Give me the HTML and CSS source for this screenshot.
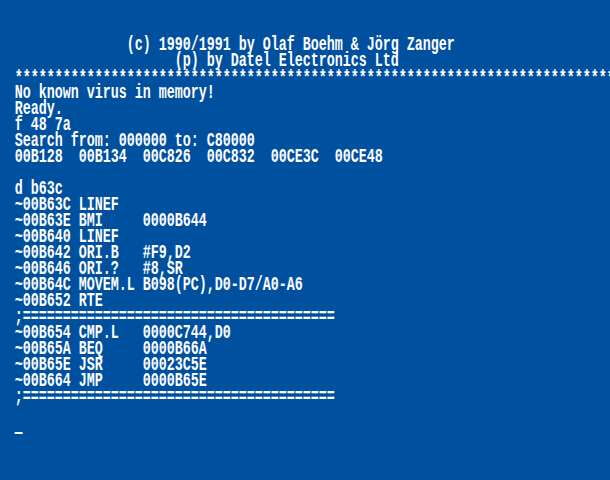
FILE: index.html
```html
<!DOCTYPE html>
<html>
<head>
<meta charset="utf-8">
<link rel="stylesheet" href="styles.css">
</head>
<body>
<pre class="screen">              (c) 1990/1991 by Olaf Boehm &amp; Jörg Zanger
                    (p) by Datel Electronics Ltd
<span class="stars">***************************************************************************</span>
No known virus in memory!
Ready.
f 48 7a
Search from: 000000 to: C80000
00B128  00B134  00C826  00C832  00CE3C  00CE48

d b63c
~00B63C LINEF
~00B63E BMI     0000B644
~00B640 LINEF
~00B642 ORI.B   #F9,D2
~00B646 ORI.?   #8,SR
~00B64C MOVEM.L B098(PC),D0-D7/A0-A6
~00B652 RTE
;=======================================
~00B654 CMP.L   0000C744,D0
~00B65A BEQ     0000B66A
~00B65E JSR     00023C5E
~00B664 JMP     0000B65E
;=======================================

<span class="cursor"></span></pre>
</body>
</html>
```
FILE: styles.css
```css
html, body {
  margin: 0;
  padding: 0;
  background: #0050a0;
  width: 610px;
  height: 480px;
  overflow: hidden;
}
.screen {
  margin: 0;
  width: 915px;
  height: 480px;
  box-sizing: border-box;
  padding: 37px 0 0 22px;
  transform: scaleX(0.6667);
  transform-origin: 0 0;
  font-family: "Liberation Mono", "DejaVu Sans Mono", monospace;
  font-weight: bold;
  font-size: 20px;
  line-height: 16px;
  color: #ffffff;
  white-space: pre;
  overflow: hidden;
}
.stars {
  display: inline-block;
  height: 16px;
  padding-top: 2px;
  box-sizing: border-box;
  vertical-align: top;
}
.cursor {
  display: inline-block;
  width: 12px;
  height: 2px;
  background: #ffffff;
}
```
